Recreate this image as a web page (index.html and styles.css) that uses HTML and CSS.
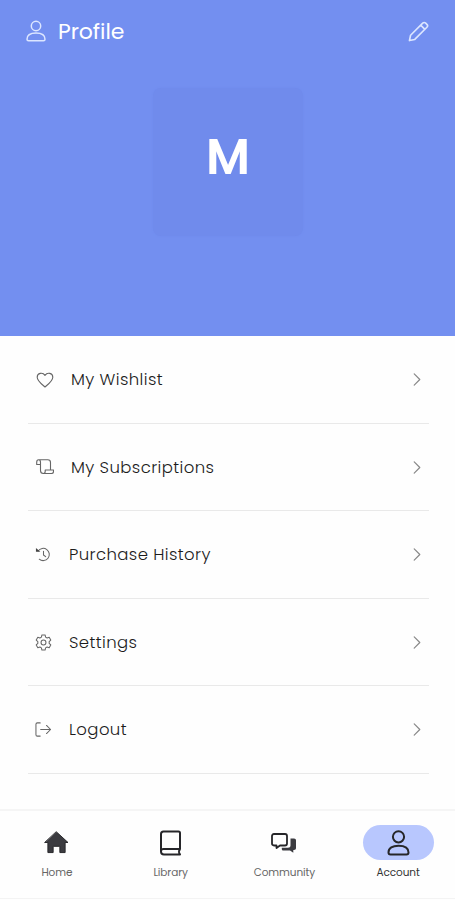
FILE: index.html
```
<!DOCTYPE html>
<html lang="en">
<head>
<meta charset="utf-8">
<meta name="viewport" content="width=device-width, initial-scale=1">
<title>Profile</title>
<link rel="stylesheet" href="styles.css">
</head>
<body>
<header class="profile-header">
<div class="top-bar">
<svg class="user-icon" viewBox="0 0 20 22"><circle cx="10" cy="6" r="4.700"/><path d="M1 19.200c0-4.200 3.600-6.300 9-6.300s9 2.100 9 6.300c0 .9-.6 1.500-1.500 1.500h-15c-.9 0-1.500-.6-1.500-1.500z"/></svg>
<h1>Profile</h1>
<svg class="edit-icon" viewBox="0 0 22 22"><path d="M1.500 20.500l1.200-5.600L15.400 2.200c.9-.9 2.200-.9 3.100 0l1.300 1.300c.9.9.9 2.200 0 3.100L7.100 19.300z M13.300 4.300l4.400 4.400"/></svg>
</div>
<div class="avatar">M</div>
</header>
<main class="menu">
<a class="menu-item wide">
<svg class="menu-icon" viewBox="0 0 18 18"><path d="M9 16C5.600 13 1.200 9.800 1.200 6.200c0-4.200 5.400-5.400 7.800-1.800 2.400-3.600 7.800-2.400 7.800 1.800 0 3.600-4.400 6.800-7.800 9.800z"/></svg>
<span class="label">My Wishlist</span>
<svg class="chevron" viewBox="0 0 8 14"><path d="M1 1l6 6-6 6"/></svg>
</a>
<a class="menu-item wide">
<svg class="menu-icon" viewBox="0 0 18 18"><path d="M4.500 6.500H.7V4.300c0-3.400 3.800-3.400 3.800 0v8.200c0 1.900 1 3 2.800 3M2.600 1.800h9.200c1.800 0 2.700 1 2.700 2.700v7.500M9.200 12h8.300v1.500c0 1.300-.7 2-2 2H7.300c1.300 0 1.900-.8 1.900-2z"/></svg>
<span class="label">My Subscriptions</span>
<svg class="chevron" viewBox="0 0 8 14"><path d="M1 1l6 6-6 6"/></svg>
</a>
<a class="menu-item">
<svg class="menu-icon" viewBox="0 0 18 18"><path d="M3.300 5.300A6.500 6.500 0 1 1 4.500 14M9 5.500v4l2.300 1.700"/><path class="dot" d="M1 2l4.600 4H1z"/></svg>
<span class="label">Purchase History</span>
<svg class="chevron" viewBox="0 0 8 14"><path d="M1 1l6 6-6 6"/></svg>
</a>
<a class="menu-item">
<svg class="menu-icon" viewBox="0 0 18 18"><path d="M7.300 1h3.400l.5 2.300 1.600.9 2.200-.7 1.700 2.900-1.700 1.600v2l1.700 1.600-1.700 2.900-2.200-.7-1.600.9-.5 2.300H7.300l-.5-2.300-1.600-.9-2.200.7-1.700-2.900L3 10V8L1.300 6.400 3 3.500l2.200.7 1.600-.9z"/><circle cx="9" cy="9" r="2.600"/></svg>
<span class="label">Settings</span>
<svg class="chevron" viewBox="0 0 8 14"><path d="M1 1l6 6-6 6"/></svg>
</a>
<a class="menu-item">
<svg class="menu-icon" viewBox="0 0 18 18"><path d="M5.500 2h-3C1.500 2 1 2.500 1 3.500v11c0 1 .5 1.500 1.500 1.500h3M6 9h10.500M12.200 4.700L16.500 9l-4.300 4.300"/></svg>
<span class="label">Logout</span>
<svg class="chevron" viewBox="0 0 8 14"><path d="M1 1l6 6-6 6"/></svg>
</a>
</main>
<nav class="bottom-nav">
<a class="tab">
<span class="tab-icon"><svg class="home" viewBox="0 0 26 24"><path d="M13 1l12 11h-3v10.500h-5.500V16h-7v6.500H4V12H1z"/></svg></span>
<span class="tab-label">Home</span>
</a>
<a class="tab">
<span class="tab-icon"><svg class="book" viewBox="0 0 22 26"><path d="M20.500 19V3c0-1-.5-1.500-1.500-1.500H4C2.500 1.500 1.500 2.500 1.500 4v17.500c0 2 1 3 3 3h16M1.500 21c0-1.300 1-2 2.500-2h16.500c-1.300 1.500-1.300 4 0 5.500"/></svg></span>
<span class="tab-label">Library</span>
</a>
<a class="tab">
<span class="tab-icon"><svg class="chat" viewBox="0 0 26 20"><path class="solid" d="M19.500 5.500H23c1.300 0 2 .7 2 2V15c0 1.300-.7 2-2 2h-.7v2.800L19 17.500h-6.500c-1 0-1.700-.5-1.700-1.500v-1.200H17c1.500 0 2.500-1 2.500-2.300z"/><path d="M3 1h11c1.300 0 2 .7 2 2v7.500c0 1.300-.7 2-2 2H9L5.500 15v-2.500H3c-1.300 0-2-.7-2-2V3c0-1.300.7-2 2-2z"/></svg></span>
<span class="tab-label">Community</span>
</a>
<a class="tab active">
<span class="tab-icon"><svg class="account" viewBox="0 0 22 26"><circle cx="11" cy="6.800" r="5.600"/><path d="M1 22.500c0-4.500 4-6.800 10-6.800s10 2.300 10 6.800c0 1.300-.7 2-2 2H3c-1.300 0-2-.7-2-2z"/></svg></span>
<span class="tab-label">Account</span>
</a>
</nav>
</body>
</html>
```

FILE: styles.css
```
* {
  box-sizing: border-box;
}

body {
  margin: 0;
  height: 900px;
  background-color: #fefefe;
  color: #1c1c1c;
  font-family: Poppins, Inter, sans-serif;
  overflow: hidden;
}

svg {
  display: block;
  flex: none;
  fill: none;
  stroke: currentColor;
  stroke-linecap: round;
  stroke-linejoin: round;
}

/* Header */
.profile-header {
  height: 336px;
  background-color: #738ff0;
  color: #fff;
}

.top-bar {
  display: flex;
  align-items: center;
  height: 62px;
  padding: 0 26px;
}

.user-icon {
  width: 20px;
  height: 22px;
  stroke: #dce6ff;
  stroke-width: 1.5;
}

h1 {
  margin: 1px 0 0 12px;
  font-size: 22px;
  font-weight: 400;
  line-height: 30px;
  letter-spacing: -0.05px;
}

.edit-icon {
  width: 21px;
  height: 21px;
  margin-left: auto;
  stroke: #dce6ff;
  stroke-width: 1.7;
}

.avatar {
  display: flex;
  align-items: center;
  justify-content: center;
  width: 150px;
  height: 148px;
  margin: 26px auto 0;
  padding: 0 0 9px 1px;
  border-radius: 8px;
  background-color: #708bec;
  box-shadow: 0 0 2px #708bec;
  font-size: 49px;
  font-weight: 600;
}

/* Menu */
.menu {
  height: 473px;
  padding: 0 26px 0 28px;
}

.menu-item {
  display: flex;
  align-items: center;
  height: 87.5px;
  padding: 1px 8px 0 7px;
  border-bottom: 1px solid #e9e9e9;
}

.menu-icon {
  width: 17px;
  height: 17px;
  margin-right: 17px;
  stroke: #666;
  stroke-width: 1.1;
}

.wide .menu-icon {
  width: 18px;
  height: 18px;
  margin-left: 1px;
}

.dot {
  fill: #444;
  stroke: none;
}

.label {
  font-size: 16.5px;
  font-weight: 300;
  letter-spacing: 0.4px;
}

.chevron {
  width: 8px;
  height: 13px;
  margin-left: auto;
  stroke: #888;
  stroke-width: 1.3;
}

/* Bottom navigation */
.bottom-nav {
  display: grid;
  grid-template-columns: repeat(4, 1fr);
  height: 90px;
  padding-top: 14px;
  border-top: 2px solid #f5f5f5;
  border-bottom: 1px solid #f3f3f3;
}

.tab {
  display: flex;
  flex-direction: column;
  align-items: center;
}

.tab-icon {
  display: flex;
  align-items: center;
  justify-content: center;
  width: 71px;
  height: 35px;
  border-radius: 18px;
  color: #262629;
}

.active .tab-icon {
  background-color: #b8c7fe;
}

.tab-label {
  margin-top: 5px;
  color: #666;
  font-size: 10.5px;
  line-height: 16px;
  letter-spacing: -0.1px;
}

.active .tab-label {
  color: #333;
}

.home {
  width: 25px;
  height: 23px;
  fill: #3b3b40;
}

.book {
  width: 23px;
  height: 26px;
  stroke-width: 2;
}

.chat {
  width: 26px;
  height: 20px;
  stroke-width: 1.8;
}

.chat .solid {
  fill: #3b3b40;
  stroke: none;
}

.account {
  width: 23px;
  height: 26px;
  stroke-width: 2;
}
```
